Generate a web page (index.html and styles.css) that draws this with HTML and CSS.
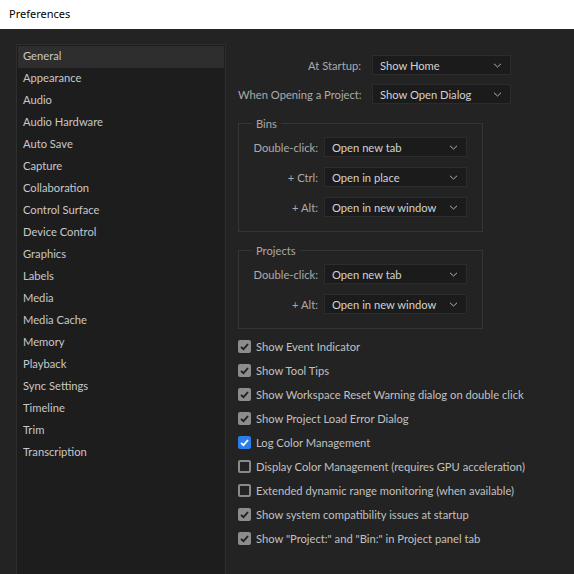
FILE: index.html
```html
<!DOCTYPE html>
<html>
<head>
<meta charset="utf-8">
<link rel="stylesheet" href="styles.css">
</head>
<body>
<div class="titlebar">Preferences</div>
<div class="main">
  <ul class="sidebar">
    <li class="selected">General</li>
    <li>Appearance</li>
    <li>Audio</li>
    <li>Audio Hardware</li>
    <li>Auto Save</li>
    <li>Capture</li>
    <li>Collaboration</li>
    <li>Control Surface</li>
    <li>Device Control</li>
    <li>Graphics</li>
    <li>Labels</li>
    <li>Media</li>
    <li>Media Cache</li>
    <li>Memory</li>
    <li>Playback</li>
    <li>Sync Settings</li>
    <li>Timeline</li>
    <li>Trim</li>
    <li>Transcription</li>
  </ul>
  <div class="content">
    <div class="form top">
      <span class="label">At Startup:</span>
      <div class="select wide"><span>Show Home</span><svg viewBox="0 0 9 5" class="chev"><path d="M1 0.8 L4.5 4 L8 0.8"/></svg></div>
      <span class="label">When Opening a Project:</span>
      <div class="select wide"><span>Show Open Dialog</span><svg viewBox="0 0 9 5" class="chev"><path d="M1 0.8 L4.5 4 L8 0.8"/></svg></div>
    </div>
    <fieldset class="group bins">
      <legend>Bins</legend>
      <div class="form inner">
        <span class="label">Double-click:</span>
        <div class="select"><span>Open new tab</span><svg viewBox="0 0 9 5" class="chev"><path d="M1 0.8 L4.5 4 L8 0.8"/></svg></div>
        <span class="label">+ Ctrl:</span>
        <div class="select"><span>Open in place</span><svg viewBox="0 0 9 5" class="chev"><path d="M1 0.8 L4.5 4 L8 0.8"/></svg></div>
        <span class="label">+ Alt:</span>
        <div class="select"><span>Open in new window</span><svg viewBox="0 0 9 5" class="chev"><path d="M1 0.8 L4.5 4 L8 0.8"/></svg></div>
      </div>
    </fieldset>
    <fieldset class="group projects">
      <legend>Projects</legend>
      <div class="form inner">
        <span class="label">Double-click:</span>
        <div class="select"><span>Open new tab</span><svg viewBox="0 0 9 5" class="chev"><path d="M1 0.8 L4.5 4 L8 0.8"/></svg></div>
        <span class="label">+ Alt:</span>
        <div class="select"><span>Open in new window</span><svg viewBox="0 0 9 5" class="chev"><path d="M1 0.8 L4.5 4 L8 0.8"/></svg></div>
      </div>
    </fieldset>
    <ul class="checks">
      <li><span class="box on"><svg viewBox="0 0 13 13"><path d="M3 6.8 L5.5 9.2 L10 4"/></svg></span>Show Event Indicator</li>
      <li><span class="box on"><svg viewBox="0 0 13 13"><path d="M3 6.8 L5.5 9.2 L10 4"/></svg></span>Show Tool Tips</li>
      <li><span class="box on"><svg viewBox="0 0 13 13"><path d="M3 6.8 L5.5 9.2 L10 4"/></svg></span>Show Workspace Reset Warning dialog on double click</li>
      <li><span class="box on"><svg viewBox="0 0 13 13"><path d="M3 6.8 L5.5 9.2 L10 4"/></svg></span>Show Project Load Error Dialog</li>
      <li><span class="box blue"><svg viewBox="0 0 13 13"><path d="M3 6.8 L5.5 9.2 L10 4"/></svg></span>Log Color Management</li>
      <li><span class="box off"></span>Display Color Management (requires GPU acceleration)</li>
      <li><span class="box off"></span>Extended dynamic range monitoring (when available)</li>
      <li><span class="box on"><svg viewBox="0 0 13 13"><path d="M3 6.8 L5.5 9.2 L10 4"/></svg></span>Show system compatibility issues at startup</li>
      <li><span class="box on"><svg viewBox="0 0 13 13"><path d="M3 6.8 L5.5 9.2 L10 4"/></svg></span>Show "Project:" and "Bin:" in Project panel tab</li>
    </ul>
  </div>
</div>
</body>
</html>
```
FILE: styles.css
```css
html, body {
  margin: 0;
  padding: 0;
  height: 100%;
  overflow: hidden;
}
body {
  background: #232323;
  font-family: "Lato", "Noto Sans", sans-serif;
  font-size: 11.2px;
  color: #c4c4c4;
}
.titlebar {
  height: 29px;
  background: #ffffff;
  color: #000000;
  font-family: "Noto Sans", "Liberation Sans", sans-serif;
  font-size: 11px;
  line-height: 28px;
  padding-left: 9px;
  box-sizing: border-box;
}
.main {
  display: flex;
  padding: 15px 0 0 16px;
  height: calc(100% - 29px);
  box-sizing: border-box;
}
.sidebar {
  list-style: none;
  margin: 0;
  padding: 1px;
  width: 210px;
  box-sizing: border-box;
  background: #1d1d1d;
  border: 1px solid #2e2e2e;
  border-bottom: none;
  flex: none;
}
.sidebar li {
  height: 22px;
  line-height: 20px;
  padding-left: 5px;
  color: #c8c8c8;
}
.sidebar li.selected {
  background: #2e2e2e;
}
.content {
  margin-left: 12px;
  padding-top: 11px;
  width: 320px;
}
.form {
  display: grid;
  align-items: center;
}
.form.top {
  grid-template-columns: 123px 139px;
  column-gap: 11px;
  row-gap: 9px;
}
.label {
  text-align: right;
  color: #ababab;
  white-space: nowrap;
}
.select {
  height: 20px;
  box-sizing: border-box;
  background: #1b1b1b;
  border: 1px solid #2c2c2c;
  display: flex;
  align-items: center;
  justify-content: space-between;
  padding: 0 8px 0 7px;
  color: #d2d2d2;
  white-space: nowrap;
}
.chev {
  width: 9px;
  height: 5px;
  fill: none;
  stroke: #b0b0b0;
  stroke-width: 1;
  flex: none;
}
.group {
  margin: 0;
  border: 1px solid #353535;
  width: 245px;
  box-sizing: border-box;
  padding: 0 15px 14px 8px;
}
.group legend {
  color: #a8a8a8;
  padding: 0 4px;
  margin-left: 5px;
  line-height: 15px;
}
.bins {
  margin-top: 12px;
}
.projects {
  margin-top: 11px;
}
.form.inner {
  grid-template-columns: 71px 143px;
  column-gap: 6px;
  row-gap: 10px;
  margin-top: 6px;
}
.checks {
  list-style: none;
  margin: 5px 0 0 0;
  padding: 0;
}
.checks li {
  display: flex;
  align-items: center;
  height: 24px;
  color: #c0c0c0;
  white-space: nowrap;
}
.box {
  width: 13px;
  height: 13px;
  box-sizing: border-box;
  border-radius: 2px;
  margin-right: 5px;
  flex: none;
  display: flex;
}
.box svg {
  width: 13px;
  height: 13px;
  fill: none;
  stroke-width: 1.8;
}
.box.on {
  background: #8c8c8c;
}
.box.on svg {
  stroke: #1e1e1e;
}
.box.blue {
  background: #2b7de9;
}
.box.blue svg {
  stroke: #ffffff;
}
.box.off {
  border: 2px solid #8a8a8a;
}
```
